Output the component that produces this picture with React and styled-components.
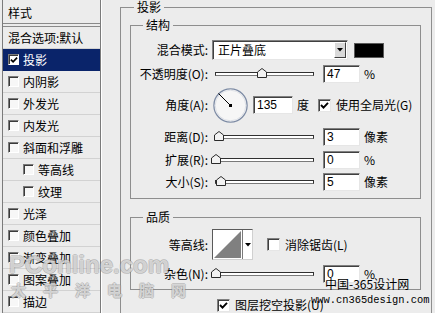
import React from 'react';
import styled, { createGlobalStyle } from 'styled-components';

const cjk = `"Noto Sans CJK SC", "Noto Sans", sans-serif`;

const GlobalStyle = createGlobalStyle`
  html, body { margin: 0; padding: 0; background: #ececec; }
  body { font-family: ${cjk}; font-size: 12px; color: #000; }
  * { box-sizing: border-box; }
`;

const Frame = styled.div`
  position: relative;
  width: 435px;
  height: 313px;
  overflow: hidden;
  display: flex;
  align-items: flex-start;
  background: #ececec;
  font-family: ${cjk};
  font-size: 12px;
  line-height: 14px;
  color: #000;
`;

/* ---------- left style list ---------- */
const StylePanel = styled.div`
  flex: none;
  width: 99px;
  height: 313px;
  margin-left: 2px;
  border-left: 1px solid #7b7b7b;
  border-right: 1px solid #7b7b7b;
  box-shadow: 1px 0 0 #fff;
  display: flex;
  flex-direction: column;
`;

const PanelHeader = styled.div`
  height: 25px;
  padding: 3px 0 0 5px;
  display: flex;
  align-items: center;
  border-bottom: 1px solid #8a8a8a;
  margin-bottom: 2px;
`;

const StyleRows = styled.div`
  border-top: 1px solid #8a8a8a;
  display: flex;
  flex-direction: column;
`;

const StyleRow = styled.div`
  height: 22px;
  display: flex;
  align-items: center;
  gap: 4px;
  padding-left: ${p => (p.$indent ? 20 : 5)}px;
  border-bottom: 1px solid ${p => (p.$selected ? '#0a246a' : '#d2d2d2')};
  background: ${p => (p.$selected ? '#0a246a' : 'transparent')};
  color: ${p => (p.$selected ? '#fff' : '#000')};
  white-space: nowrap;
`;

const SmallBox = styled.span`
  flex: none;
  width: 11px;
  height: 11px;
  background: ${p => (p.$on ? '#fff' : '#f7f7f7')};
  border: 1px solid;
  border-color: #7a7a7a #fff #fff #7a7a7a;
  box-shadow: inset 1px 1px 0 #3a3a3a;
  display: flex;
  align-items: center;
  justify-content: center;
`;

/* ---------- group boxes ---------- */
const Group = styled.fieldset`
  flex: none;
  margin: ${p => p.$m || '0'};
  padding: ${p => p.$p};
  width: ${p => p.$w}px;
  min-inline-size: 0;
  border: 1px solid #8e8e8e;
`;

const Legend = styled.legend`
  margin-left: ${p => p.$ml}px;
  padding: 0 3px;
  font-size: 12px;
  line-height: 12px;
  height: 12px;
`;

const Row = styled.div`
  display: flex;
  align-items: center;
  height: ${p => p.$h}px;
  margin-top: ${p => p.$mt || 0}px;
  white-space: nowrap;
`;

const Label = styled.div`
  flex: none;
  width: 77px;
  text-align: right;
`;

const Text = styled.span`
  flex: none;
  margin-left: ${p => p.$ml || 0}px;
`;

/* ---------- controls ---------- */
const Select = styled.div`
  flex: none;
  width: 136px;
  height: 20px;
  margin-left: 4px;
  display: flex;
  align-items: stretch;
  background: #fff;
  border: 1px solid;
  border-color: #808080 #e6e6e6 #e6e6e6 #808080;
  box-shadow: inset 1px 1px 0 #404040;
`;

const SelectText = styled.span`
  flex: 1;
  padding-left: 5px;
  display: flex;
  align-items: center;
`;

const SelectButton = styled.span`
  flex: none;
  width: 12px;
  margin: 1px 1px 1px 0;
  background: #d9d9d9;
  border: 1px solid;
  border-color: #fff #404040 #404040 #fff;
  display: flex;
  align-items: center;
  justify-content: center;
`;

const Swatch = styled.div`
  flex: none;
  width: 30px;
  height: 15px;
  margin-left: 6px;
  background: #000;
  border: 1px solid #5a5a5a;
`;

const SliderBox = styled.div`
  position: relative;
  flex: none;
  width: 102px;
  height: 18px;
  margin-left: 4px;
  padding-left: 3px;
  display: flex;
  align-items: center;
`;

const Track = styled.div`
  flex: 1;
  height: 4px;
  background: #fff;
  border: 1px solid #303030;
  border-bottom-color: #7a7a7a;
`;

const Thumb = styled.svg`
  position: absolute;
  top: 3px;
  display: block;
`;

const NumBox = styled.div`
  flex: none;
  width: ${p => p.$w || 37}px;
  height: 18px;
  margin-left: ${p => p.$ml || 9}px;
  padding-left: 3px;
  background: #fff;
  border: 1px solid;
  border-color: #808080 #e6e6e6 #e6e6e6 #808080;
  box-shadow: inset 1px 1px 0 #404040;
  font-family: "Liberation Sans", Arial, sans-serif;
  font-size: 12px;
  line-height: 16px;
`;

const Dial = styled.svg`
  flex: none;
  display: block;
  margin-left: 5px;
`;

const CheckBox = styled.span`
  flex: none;
  width: 13px;
  height: 13px;
  margin-left: ${p => p.$ml || 0}px;
  background: #fff;
  border: 1px solid;
  border-color: #808080 #e6e6e6 #e6e6e6 #808080;
  box-shadow: inset 1px 1px 0 #404040;
  display: flex;
  align-items: center;
  justify-content: center;
`;

const ContourBox = styled.div`
  flex: none;
  width: 41px;
  height: 31px;
  margin-left: 4px;
  display: flex;
  background: #fff;
  border: 1px solid;
  border-color: #5a5a5a #d0d0d0 #d0d0d0 #5a5a5a;
`;

const ContourArrow = styled.div`
  flex: 1;
  border-left: 1px solid #7a7a7a;
  display: flex;
  align-items: center;
  justify-content: center;
`;

const BottomRow = styled.div`
  display: flex;
  align-items: center;
  margin: 8px 0 0 87px;
  white-space: nowrap;
`;

/* ---------- watermarks (overlay) ---------- */
const outline = `
  1px 0 0 rgba(120, 120, 120, 0.35),
  -1px 0 0 rgba(120, 120, 120, 0.35),
  0 1px 0 rgba(120, 120, 120, 0.35),
  0 -1px 0 rgba(120, 120, 120, 0.35)
`;

const MarkPC = styled.div`
  position: absolute;
  left: 9px;
  top: 251px;
  font-family: "Liberation Sans", Arial, sans-serif;
  font-weight: bold;
  font-size: 24px;
  line-height: 28px;
  color: rgba(255, 255, 255, 0.6);
  text-shadow: ${outline};
  pointer-events: none;
  white-space: nowrap;
`;

const MarkPCCn = styled.div`
  position: absolute;
  left: 11px;
  top: 281px;
  font-family: ${cjk};
  font-weight: bold;
  font-size: 15px;
  line-height: 17px;
  letter-spacing: 17px;
  color: rgba(255, 255, 255, 0.6);
  text-shadow: ${outline};
  pointer-events: none;
  white-space: nowrap;
`;

const Mark365 = styled.div`
  position: absolute;
  left: 325px;
  top: 277px;
  font-size: 12px;
  line-height: 13px;
  pointer-events: none;
  white-space: nowrap;
`;

const MarkUrl = styled.div`
  position: absolute;
  left: 311px;
  top: 294px;
  font-family: "Liberation Mono", "Courier New", monospace;
  font-size: 10.4px;
  line-height: 12px;
  pointer-events: none;
  white-space: nowrap;
`;

/* ---------- small drawings ---------- */
const Tick = ({ size = 9 }) => (
  <svg width={size} height={size} viewBox="0 0 9 9">
    <polyline points="1,4 3.5,6.6 8,1.8" fill="none" stroke="#000" strokeWidth="1.9" />
  </svg>
);

const DownTri = () => (
  <svg width="6" height="4" viewBox="0 0 6 4">
    <polygon points="0,0 6,0 3,3.5" fill="#000" />
  </svg>
);

const Slider = ({ pos }) => (
  <SliderBox>
    <Track />
    <Thumb width="10" height="10" viewBox="0 0 10 10" style={{ left: pos - 5 }}>
      <polygon points="0.5,4 5,0.5 9.5,4 9.5,9.5 0.5,9.5" fill="#f2f2f2" stroke="#2a2a2a" strokeWidth="1" />
    </Thumb>
  </SliderBox>
);

const styleItems = [
  { label: '混合选项:默认', plain: true },
  { label: '投影', on: true, selected: true },
  { label: '内阴影' },
  { label: '外发光' },
  { label: '内发光' },
  { label: '斜面和浮雕' },
  { label: '等高线', indent: true },
  { label: '纹理', indent: true },
  { label: '光泽' },
  { label: '颜色叠加' },
  { label: '渐变叠加' },
  { label: '图案叠加' },
  { label: '描边' },
];

export default function App() {
  return (
    <Frame>
      <GlobalStyle />
      <StylePanel>
        <PanelHeader>样式</PanelHeader>
        <StyleRows>
          {styleItems.map(it => (
            <StyleRow key={it.label} $selected={it.selected} $indent={it.indent}>
              {!it.plain && <SmallBox $on={it.on}>{it.on && <Tick size={8} />}</SmallBox>}
              <span>{it.label}</span>
            </StyleRow>
          ))}
        </StyleRows>
      </StylePanel>

      <Group $w={312} $m="1px 0 0 19px" $p="6px 10px 40px 9px">
        <Legend $ml={4}>投影</Legend>

        <Group $w={291} $p="9px 0 7px 0">
          <Legend $ml={12}>结构</Legend>
          <Row $h={20}>
            <Label>混合模式:</Label>
            <Select>
              <SelectText>正片叠底</SelectText>
              <SelectButton><DownTri /></SelectButton>
            </Select>
            <Swatch />
          </Row>
          <Row $h={18} $mt={5}>
            <Label>不透明度(O):</Label>
            <Slider pos={50} />
            <NumBox>47</NumBox>
            <Text $ml={4}>%</Text>
          </Row>
          <Row $h={34} $mt={5}>
            <Label>角度(A):</Label>
            <Dial width="35" height="35" viewBox="0 0 35 35">
              <circle cx="17.5" cy="17.5" r="16.6" fill="#f6f6f6" stroke="#7e8ca5" strokeWidth="1.3" />
              <circle cx="17.5" cy="17.5" r="15.3" fill="none" stroke="#dde0e6" strokeWidth="1" />
              <line x1="17.5" y1="17.5" x2="5.5" y2="5.5" stroke="#000" strokeWidth="1" />
              <rect x="16" y="16" width="3" height="3" fill="#000" />
            </Dial>
            <NumBox $w={40} $ml={5}>135</NumBox>
            <Text $ml={4}>度</Text>
            <CheckBox $ml={9}><Tick /></CheckBox>
            <Text $ml={5}>使用全局光(G)</Text>
          </Row>
          <Row $h={18} $mt={6}>
            <Label>距离(D):</Label>
            <Slider pos={7} />
            <NumBox>3</NumBox>
            <Text $ml={4}>像素</Text>
          </Row>
          <Row $h={18} $mt={5}>
            <Label>扩展(R):</Label>
            <Slider pos={4} />
            <NumBox>0</NumBox>
            <Text $ml={4}>%</Text>
          </Row>
          <Row $h={18} $mt={4}>
            <Label>大小(S):</Label>
            <Slider pos={9} />
            <NumBox>5</NumBox>
            <Text $ml={4}>像素</Text>
          </Row>
        </Group>

        <Group $w={291} $m="12px 0 0 0" $p="6px 0 6px 0">
          <Legend $ml={12}>品质</Legend>
          <Row $h={31}>
            <Label>等高线:</Label>
            <ContourBox>
              <svg width="29" height="29" viewBox="0 0 29 29" style={{ display: 'block', flex: 'none' }}>
                <polygon points="1,28 28,1 28,28" fill="#808080" />
              </svg>
              <ContourArrow><DownTri /></ContourArrow>
            </ContourBox>
            <CheckBox $ml={14} />
            <Text $ml={5}>消除锯齿(L)</Text>
          </Row>
          <Row $h={18} $mt={5}>
            <Label>杂色(N):</Label>
            <Slider pos={4} />
            <NumBox>0</NumBox>
            <Text $ml={4}>%</Text>
          </Row>
        </Group>

        <BottomRow>
          <CheckBox><Tick /></CheckBox>
          <Text $ml={5}>图层挖空投影(U)</Text>
        </BottomRow>
      </Group>

      <MarkPC>PConline.com</MarkPC>
      <MarkPCCn>太平洋电脑网</MarkPCCn>
      <Mark365>中国-365设计网</Mark365>
      <MarkUrl>www.cn365design.com</MarkUrl>
    </Frame>
  );
}
